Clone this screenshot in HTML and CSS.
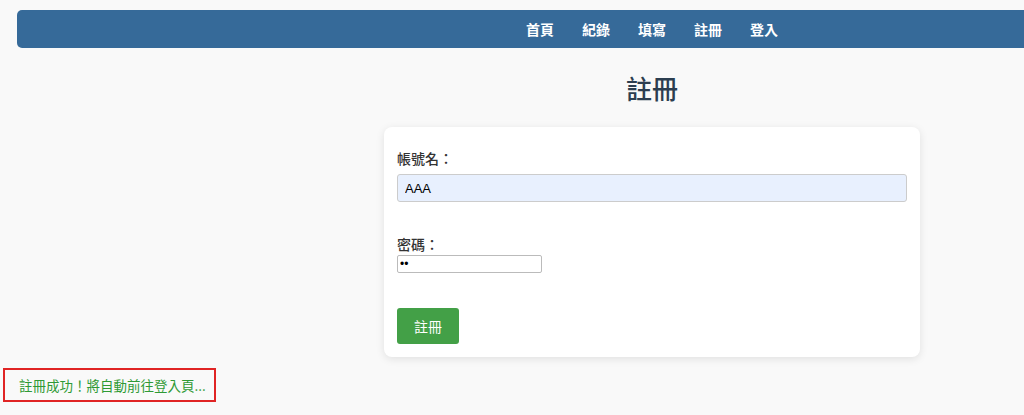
FILE: index.html
```html
<!DOCTYPE html>
<html lang="zh-Hant">
<head>
<meta charset="utf-8">
<title>註冊</title>
<link rel="stylesheet" href="styles.css">
</head>
<body>
<div class="page">
  <nav class="navbar">
    <a href="#">首頁</a>
    <a href="#">紀錄</a>
    <a href="#">填寫</a>
    <a href="#">註冊</a>
    <a href="#">登入</a>
  </nav>
  <h2 class="title">註冊</h2>
  <form class="card">
    <label class="label label-first" for="user">帳號名：</label>
    <input class="text-input" id="user" type="text" value="AAA">
    <label class="label label-second" for="pw">密碼：</label>
    <input class="pw-input" id="pw" type="password" value="12">
    <button class="btn" type="button">註冊</button>
  </form>
  <div class="message">註冊成功！將自動前往登入頁...</div>
</div>
</body>
</html>
```
FILE: styles.css
```css
html, body {
  margin: 0;
  padding: 0;
  overflow: hidden;
}
body {
  background: #f9f9f9;
  font-family: "Noto Sans CJK TC", "Liberation Sans", sans-serif;
  color: #333;
}
.page {
  width: 1304px;
  padding-top: 10px;
}
.navbar {
  margin: 0 17px;
  height: 38px;
  background: #366a99;
  border-radius: 5px;
  display: flex;
  justify-content: center;
  align-items: center;
}
.navbar a {
  color: #fff;
  text-decoration: none;
  font-weight: bold;
  font-size: 14px;
  padding: 0 14px;
  line-height: 20px;
}
.title {
  margin: 22px 0 21px;
  text-align: center;
  font-size: 26px;
  line-height: 36px;
  color: #2c3e50;
  font-weight: 500;
}
.card {
  width: 510px;
  margin: 0 auto;
  padding: 20px 13px 13px;
  background: #fff;
  border-radius: 8px;
  box-shadow: 0 2px 8px rgba(0, 0, 0, 0.1);
  display: flex;
  flex-direction: column;
  align-items: flex-start;
}
.label {
  font-size: 14px;
  line-height: 22px;
  color: #333;
  font-weight: 500;
}
.label-first {
  margin-bottom: 5px;
}
.label-second {
  margin-top: 31px;
}
.text-input {
  box-sizing: border-box;
  width: 510px;
  height: 28px;
  padding: 0 7px;
  background: #e8f0fe;
  border: 1px solid #ccc;
  border-radius: 3px;
  font-family: "Liberation Sans", sans-serif;
  font-size: 13px;
  color: #000;
  outline: none;
}
.pw-input {
  box-sizing: border-box;
  width: 145px;
  height: 18px;
  padding: 0 2px;
  border: 1px solid #bbb;
  border-radius: 2px;
  font-family: "Liberation Sans", sans-serif;
  font-size: 12px;
  background: #fff;
  outline: none;
}
.btn {
  margin-top: 35px;
  width: 62px;
  height: 36px;
  background: #43a047;
  color: #fff;
  border: none;
  border-radius: 3px;
  font-family: "Noto Sans CJK TC", sans-serif;
  font-size: 14px;
  cursor: pointer;
}
.message {
  box-sizing: border-box;
  margin: 11px 0 0 3px;
  width: 213px;
  height: 34px;
  border: 2px solid #e02424;
  padding-left: 14px;
  font-size: 13.5px;
  line-height: 30px;
  color: #2f9a35;
}
```
